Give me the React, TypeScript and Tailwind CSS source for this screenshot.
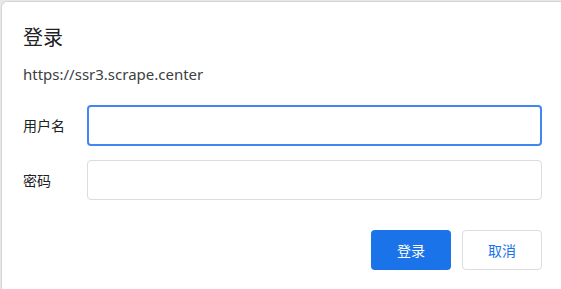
import React from "react";

const font = { fontFamily: '"Noto Sans", "Noto Sans CJK SC", sans-serif' };

const Field: React.FC<{ label: string; focused?: boolean; type?: string }> = ({
  label,
  focused = false,
  type = "text",
}) => (
  <div className="flex items-center">
    <label className="w-[64px] shrink-0 text-[14px] text-[#202124]">{label}</label>
    <input
      type={type}
      className={
        focused
          ? "h-[41px] w-[456px] rounded-[4px] border-2 border-[#4285f4] bg-white outline-none"
          : "h-[40px] w-[455px] rounded-[4px] border border-[#dadce0] bg-white outline-none"
      }
    />
  </div>
);

export default function App() {
  return (
    <div className="h-[289px] w-[561px] bg-[#e8e8e8] pl-[1px] pt-[1px]" style={font}>
      <div className="flex h-full w-full flex-col rounded-tl-[6px] border-l border-t border-[#d4d4d4] bg-white pl-[21px] pr-[19px]">
        <h2 className="mt-[22px] text-[20px] leading-[28px] text-[#202124]">登录</h2>
        <p className="mt-[12px] text-[15px] leading-[20px] text-[#3c4043]">https://ssr3.scrape.center</p>
        <div className="mt-[21px] flex flex-col gap-[14px]">
          <Field label="用户名" focused />
          <Field label="密码" type="password" />
        </div>
        <div className="mt-[30px] flex justify-end gap-[11px]">
          <button className="h-[40px] w-[80px] rounded-[4px] bg-[#1a73e8] text-[14px] text-white">登录</button>
          <button className="h-[40px] w-[80px] rounded-[4px] border border-[#dadce0] bg-white text-[14px] text-[#1a73e8]">
            取消
          </button>
        </div>
      </div>
    </div>
  );
}
